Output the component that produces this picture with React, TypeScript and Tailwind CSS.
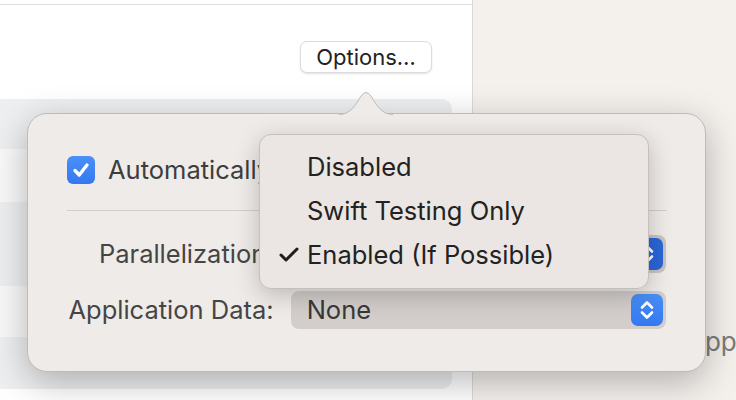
import { Check } from 'lucide-react'

const font = { fontFamily: 'Inter, "Noto Sans", sans-serif' }

function Stepper({ pressed }: { pressed?: boolean }) {
  return (
    <div
      className={
        'flex h-[32px] w-[32px] items-center justify-center rounded-[7px] ' +
        (pressed ? 'bg-[#2a66d9]' : 'bg-gradient-to-b from-[#4a90f8] to-[#3478f0]')
      }
    >
      <svg width="16" height="24" viewBox="0 0 16 24" fill="none" stroke="white" strokeWidth="2.6" strokeLinecap="round" strokeLinejoin="round">
        <path d="M3 9.5 8 4.5 13 9.5" />
        <path d="M3 14.5 8 19.5 13 14.5" />
      </svg>
    </div>
  )
}

function PopupButton({ value, pressed }: { value: string; pressed?: boolean }) {
  return (
    <div
      className={
        'flex h-[38px] w-[376px] items-center justify-between rounded-[8px] pl-[16px] pr-[3px] ' +
        (pressed ? 'bg-[#c9c4c0]' : 'bg-[#d3cecb]')
      }
    >
      <span className="text-[25.5px] text-[#383838]">{value}</span>
      <Stepper pressed={pressed} />
    </div>
  )
}

function Menu() {
  const items = [
    { label: 'Disabled', checked: false },
    { label: 'Swift Testing Only', checked: false },
    { label: 'Enabled (If Possible)', checked: true },
  ]
  return (
    <div className="absolute left-[231px] top-[20px] z-10 w-[390px] rounded-[12px] border border-[#c4c0bc] bg-[#ebe6e3] pb-[11px] pt-[10px] shadow-[0_6px_24px_rgba(0,0,0,0.22)]">
      {items.map((item) => (
        <div key={item.label} className="flex h-[44px] items-center text-[25.5px] text-[#222]">
          <span className="flex w-[47px] justify-end pr-[6px]">
            {item.checked && <Check size={24} strokeWidth={3} className="text-[#1e1e1e]" />}
          </span>
          <span>{item.label}</span>
        </div>
      ))}
    </div>
  )
}

function Popover() {
  return (
    <div className="absolute left-[27px] top-[113px] z-20 h-[259px] w-[679px] rounded-[20px] border border-[#bfbbb7] bg-[#efebe8] shadow-[0_10px_36px_rgba(0,0,0,0.28)]">
      <svg className="absolute left-[311px] top-[-25px]" width="54" height="26" viewBox="0 0 54 26">
        <path d="M0 25.5 C12 25.5 17 15 22 7 Q27 0 32 7 C37 15 42 25.5 54 25.5 Z" fill="#efebe8" />
        <path d="M0 25.5 C12 25.5 17 15 22 7 Q27 0 32 7 C37 15 42 25.5 54 25.5" fill="none" stroke="#bfbbb7" strokeWidth="1" />
      </svg>

      <div className="flex flex-col px-[39px] pt-[42px]">
        <div className="flex h-[28px] items-center gap-[13px]">
          <div className="flex h-[28px] w-[28px] shrink-0 items-center justify-center rounded-[6px] bg-gradient-to-b from-[#4a90f8] to-[#3478f0]">
            <svg width="20" height="20" viewBox="0 0 20 20" fill="none" stroke="white" strokeWidth="3.4" strokeLinecap="round" strokeLinejoin="round">
              <path d="M4 10.5 8.2 15 16 5" />
            </svg>
          </div>
          <div className="w-[160px] overflow-hidden">
            <span className="whitespace-nowrap text-[25.5px] text-[#3d3d3d]">Automatically include new tests</span>
          </div>
        </div>

        <div className="mt-[26px] h-px w-[600px] bg-[#d2cecb]" />

        <div className="mt-[24px] flex flex-col gap-[18px]">
          <div className="flex items-center gap-[17px]">
            <div className="flex w-[207px] justify-end overflow-hidden">
              <span className="whitespace-nowrap text-[25.5px] text-[#454545]">Parallelization:</span>
            </div>
            <PopupButton value="Enabled (If Possible)" pressed />
          </div>
          <div className="flex items-center gap-[17px]">
            <span className="w-[207px] whitespace-nowrap text-right text-[25.5px] text-[#454545]">Application Data:</span>
            <PopupButton value="None" />
          </div>
        </div>
      </div>

      <Menu />
    </div>
  )
}

export default function App() {
  const rows = [
    'h-[50px] bg-[#eeeff0]',
    'h-[53px] bg-[#f9f9f9]',
    'h-[84px] bg-[#eeeff0]',
    'h-[51px] bg-[#f9f9f9]',
    'h-[52px] bg-[#eeeff0]',
  ]
  return (
    <div className="relative flex h-[400px] w-[736px] overflow-hidden" style={font}>
      <div className="flex w-[473px] shrink-0 flex-col border-r border-[#d9d9d9] bg-white">
        <div className="h-[5px] border-b border-[#dedede]" />
        <div className="flex justify-end pr-[40px] pt-[36px]">
          <button className="flex h-[32px] w-[132px] items-center justify-center rounded-[7px] border border-[#dcdcdc] bg-white text-[22px] text-[#222] shadow-[0_1px_2px_rgba(0,0,0,0.12)]">
            Options…
          </button>
        </div>
        <div className="mr-[20px] mt-[26px] flex flex-col overflow-hidden rounded-r-[10px]">
          {rows.map((r, i) => (
            <div key={i} className={r} />
          ))}
        </div>
      </div>
      <div className="min-w-0 flex-1 overflow-hidden bg-[#f4f1ed] pl-[214px] pt-[322px]">
        <span className="whitespace-nowrap text-[26px] text-[#7a7a7a]">Application</span>
      </div>
      <Popover />
    </div>
  )
}
